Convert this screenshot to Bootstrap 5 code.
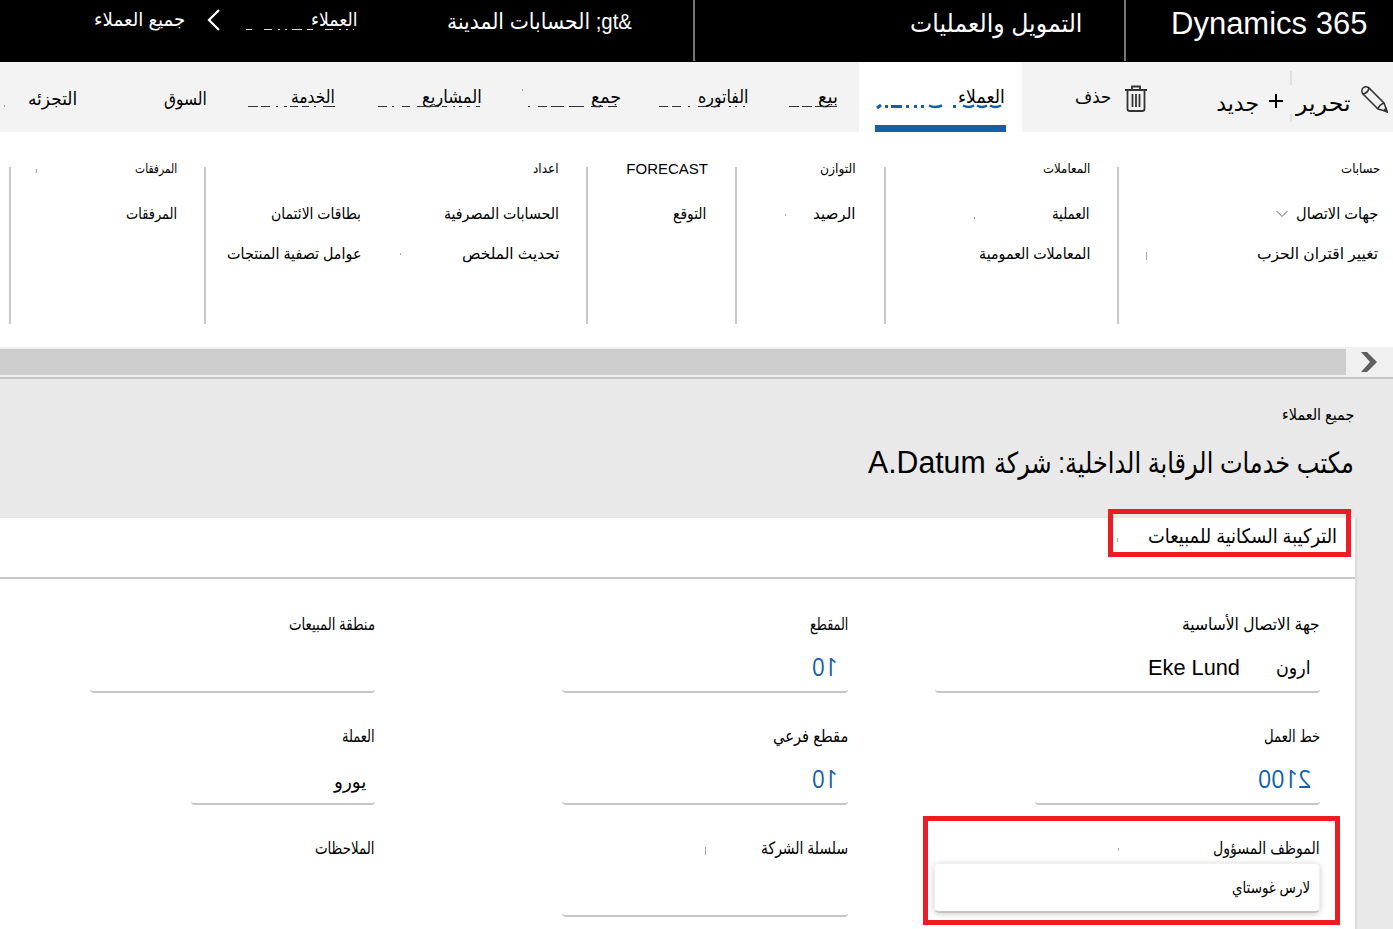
<!DOCTYPE html>
<html lang="ar" dir="rtl">
<head>
<meta charset="utf-8">
<title>Dynamics 365</title>
<link href="https://cdn.jsdelivr.net/npm/bootstrap@5.3.0/dist/css/bootstrap.min.css" rel="stylesheet">
<style>
body{width:1393px;height:929px;overflow:hidden;background:#fff;color:#000;font-family:"Liberation Sans","DejaVu Sans",sans-serif;font-size:15px;line-height:30px}
.fit{display:block;flex:none;white-space:nowrap;height:30px;line-height:30px}
.fit>span{display:inline-block;transform-origin:100% 50%}
/* header */
.topbar{height:62px;background:#000;color:#fff;border-bottom:1px solid #000}
.brand{width:269px;padding-right:26px;padding-top:9px;border-left:2px solid #767676;font-size:31px}
.app{width:431px;padding-right:42px;padding-top:8px;border-left:2px solid #767676;font-size:25px}
.crumbs{padding-right:61px}
.crumbs .c1{font-size:22px;margin-top:7px}
.crumbs .c2{font-size:19px;margin:5px 90px 0 0;position:relative}
.crumbs .chev{margin:9px 90px 0 0}
.crumbs .c3{font-size:19px;margin:5px 22px 0 0}
.residue{position:absolute;pointer-events:none}
.crumbs .residue{left:-65px;top:23px}
.tabs .residue{left:0;top:0}
/* action pane tabs */
.tabs{height:70px;background:#f3f3f3;position:relative}
.tabs .fit{font-size:18px;margin-top:20px}
.tabs .pencil{margin:24px 5px 0 0}
.tabs .edit{font-size:22px;margin:27px 10px 0 0}
.tabs .plus{margin:32px 13px 0 0;width:14px}
.tabs .new{font-size:22px;margin:27px 10px 0 0}
.tabs .bin{margin:23px 69px 0 0}
.tabs .del{margin-right:14px}
.tabs .active-tab{width:163px;margin-right:53px;background:#fff;padding-right:17px;position:relative}
.tabs .active-tab::after{content:"";position:absolute;left:16px;right:16px;bottom:0;height:7px;background:#1160a8}
.tabs .t1{margin-right:21px}.tabs .t2{margin-right:69px}.tabs .t3{margin-right:77px}.tabs .t4{margin-right:109px}
.tabs .t5{margin-right:87px}.tabs .t6{margin-right:84px;margin-top:22px}.tabs .t7{margin-right:87px;margin-top:22px}
/* action pane groups */
.groups{height:215px;padding-top:35px}
.grp{height:157px;border-left:2px solid #c8c8c8;position:relative;flex:none}
.grp .fit{font-size:15.5px;margin-right:0}
.grp .fit.hd{font-size:13px;margin:-13px 0 15px}
.grp .fit+.fit{margin-bottom:10px}
.grp .hd.latin{font-size:15px;margin-right:-1px}
.g1 .fit{margin-right:2px}
.row-menu{margin-bottom:10px}
.row-menu svg{margin:11px 8px 0 0}
.pair{width:198px}
.pair .fit+.fit,.pair+div .fit+.fit{margin-top:10px}
.g1{width:276px;padding-right:13px}.g2{width:233px;padding-right:27px}.g3{width:149px;padding-right:28px}.g4{width:149px;padding-right:28px}
.g4 .fit{margin-right:1px}
.g5{width:382px;padding-right:27px}.g6{width:195px;padding-right:27px}
.speck{position:absolute;width:1px;height:4px;background:#aaa}
.g1 .speck{left:27px;top:85px;height:8px}.g2 .speck{left:88px;top:50px;height:2px}.g3 .speck{left:48px;top:47px;height:2px}.g5 .speck{left:194px;top:86px;height:2px}.g6 .speck{left:25px;top:2px}
/* scrollbar */
.scroller{height:32px;background:#f0f0f0;border-bottom:2px solid #c6c6c6}
.thumb{width:1346px;height:26px;margin-top:2px;background:#cdcdcd}
.nextbtn{width:47px;padding:5px 16px 0 0}
/* form */
.pagehead{height:139px;background:#e9e9e9;padding-right:39px;padding-top:21px}
.pagehead .path{font-size:16px}
.pagehead .ttl{font-size:29px;margin-top:18px}
.pagehead .ttl.latin{font-size:31px;margin-right:8px}
.sheet{height:411px;background:#e9e9e9}
.paper{width:1355px;background:#fff;margin-right:38px;box-shadow:2px 0 1px #dcdcdc;position:relative}
.section-head{height:61px;border-bottom:2px solid #c8c8c8;position:relative;padding:3px 18px 0 0}
.section-head .fit{font-size:20px}
.section-head .speck{left:1117px;top:20px}
.redbox{position:absolute;border:5px solid #ed1c24;pointer-events:none}
.r1{left:1108px;top:-9px;width:243px;height:48px}
.r2{left:923px;top:298px;width:417px;height:109px}
.cols{padding:31px 35px 0 0}
.colm{flex:none;width:385px}
.colm.b{width:286px;margin-right:87px}.colm.c{width:285px;margin-right:187px}
.fld{height:112px;position:relative}
.fld>.fit{font-size:17px}
.b .speck{left:143px;top:13px;height:8px}.a .speck{left:183px;top:14px;height:3px}
.ctl{height:44px;margin-top:9px;border-bottom:2px solid #c6c6c6;border-radius:4px;padding:4px 9px 0 0}
.colm.b .ctl{padding-right:10px}
.ctl .fit{font-size:19px}
.ctl .fit.latin{font-size:22px;margin-right:36px}
.ctl .num{font-family:"Open Sans","Noto Sans",sans-serif;font-size:25px;color:#1160a8;margin-top:-2px}
.colm .w1{width:285px}.colm .w2{width:184px}
.w2 .fit{padding-top:2px}
.lookup{height:50px;width:386px;margin-top:-1px;border:1px solid #f0f0f0;border-bottom:2px solid #c3c3c3;border-radius:5px;box-shadow:0 1px 6px #ccc;padding:9px 9px 0 0}
.lookup .fit{font-size:16px}
</style>
</head>
<body>
<header class="topbar d-flex">
 <div class="brand"><div class="fit" data-w="196" dir="ltr"><span>Dynamics 365</span></div></div>
 <div class="app"><div class="fit" data-w="172"><span>التمويل والعمليات</span></div></div>
 <nav class="crumbs d-flex">
  <div class="fit c1" data-w="185"><span>&amp;gt; الحسابات المدينة</span></div>
  <div class="fit c2" data-w="47"><span>العملاء</span>
   <svg class="residue" width="112" height="3"><path d="M1 1.500H109" stroke="#ddd" stroke-dasharray="6 12 8 6 2 5 2 5 10 5"/></svg></div>
  <svg class="chev" width="13" height="22" viewBox="0 0 13 22" fill="none" stroke="#fff" stroke-width="2.300"><path d="M12 1 2 11 12 21"/></svg>
  <div class="fit c3" data-w="91"><span>جميع العملاء</span></div>
 </nav>
</header>
<nav class="tabs d-flex">
 <svg class="pencil" width="27" height="27" viewBox="0 0 27 27" fill="none" stroke="#333" stroke-width="1.500"><path d="M1.500 7.500Q0 4 2 2Q4 0 7.500 1.500L23 17 26 25.500 17 23ZM2 8Q7 7 8 2M17 23Q18 19 23 17"/><path d="M23 24.500 25 22.500 26 26Z" fill="#333"/></svg>
 <div class="fit edit" data-w="55"><span>تحرير</span></div>
 <svg class="plus" height="14" viewBox="0 0 14 14" stroke="#000" stroke-width="2"><path d="M7 0V14M0 7H14"/></svg>
 <div class="fit new" data-w="43"><span>جديد</span></div>
 <svg class="bin" width="22" height="28" viewBox="0 0 22 28" fill="none" stroke="#333" stroke-width="1.800"><path d="M0 5H22M7 4V1.500H15V4M2.500 5V24Q2.500 26 5 26H17Q19.500 26 19.500 24V5M7.500 9V22M11 9V22M14.500 9V22"/></svg>
 <div class="fit del" data-w="36"><span>حذف</span></div>
 <div class="active-tab"><div class="fit" data-w="47"><span>العملاء</span></div></div>
 <div class="fit t1" data-w="20"><span>بيع</span></div>
 <div class="fit t2" data-w="51"><span>الفاتوره</span></div>
 <div class="fit t3" data-w="30"><span>جمع</span></div>
 <div class="fit t4" data-w="60"><span>المشاريع</span></div>
 <div class="fit t5" data-w="44"><span>الخدمة</span></div>
 <div class="fit t6" data-w="43"><span>السوق</span></div>
 <div class="fit t7" data-w="49"><span>التجزئه</span></div>
 <svg class="residue" width="1393" height="70" fill="none">
  <path stroke="#333" d="M248 44.500h10m3 0h9m6 0h2m6 0h3m3 0h8m4 0h7m5 0h2m7 0h12M378 44.500h9m5 0h2m8 0h8m7 0h22m3 0h5m6 0h2m4 0h3m5 0h3m6 0h4M528 44.500h2m8 0h9m4 0h13m5 0h15m7 0h12m5 0h9M659 44.500h9m4 0h9m7 0h2m8 0h8m5 0h9m9 0h2m4 0h2m6 0h2M789 44.500h10m3 0h10m3 0h10m3 0h9"/>
  <path stroke="#e0e0e0" stroke-width="2" d="M1291 9V23M1291 52V60"/>
  <path stroke="#aaa" d="M4.500 43v2M522.500 27v2"/>
  <path stroke="#1160a8" stroke-width="3" d="M877 46l4-3M885 44.500h3M891 44.500h11M906 44.500h3M914 44.500h3M921 44.500h3M953 44.500h3"/>
  <path stroke="#1160a8" stroke-width="2.500" d="M929 43.500q6 3 13 0M963 43.500q6 3 11 0M977 43.500q5 3 10 0M990 43.500q5 3 11 0"/>
 </svg>
</nav>
<section class="groups d-flex">
 <div class="grp g1"><div class="fit hd" data-w="39"><span>حسابات</span></div>
  <div class="row-menu d-flex"><div class="fit" data-w="82"><span>جهات الاتصال</span></div><svg width="12" height="8" fill="none" stroke="#666"><path d="M.5 1 6 6.500 11.500 1"/></svg></div>
  <div class="fit" data-w="121"><span>تغيير اقتران الحزب</span></div><i class="speck"></i></div>
 <div class="grp g2"><div class="fit hd" data-w="47"><span>المعاملات</span></div><div class="fit" data-w="38"><span>العملية</span></div><div class="fit" data-w="111"><span>المعاملات العمومية</span></div><i class="speck"></i></div>
 <div class="grp g3"><div class="fit hd" data-w="36"><span>التوازن</span></div><div class="fit" data-w="43"><span>الرصيد</span></div><i class="speck"></i></div>
 <div class="grp g4"><div class="fit hd latin" data-w="82"><span>FORECAST</span></div><div class="fit" data-w="33"><span>التوقع</span></div></div>
 <div class="grp g5"><div class="fit hd" data-w="26"><span>اعداد</span></div>
  <div class="d-flex"><div class="pair"><div class="fit" data-w="115"><span>الحسابات المصرفية</span></div><div class="fit" data-w="97"><span>تحديث الملخص</span></div></div>
  <div><div class="fit" data-w="90"><span>بطاقات الائتمان</span></div><div class="fit" data-w="134"><span>عوامل تصفية المنتجات</span></div></div></div><i class="speck"></i></div>
 <div class="grp g6"><div class="fit hd" data-w="42"><span>المرفقات</span></div><div class="fit" data-w="51"><span>المرفقات</span></div><i class="speck"></i></div>
</section>
<div class="scroller d-flex"><div class="nextbtn"><svg class="d-block" width="16" height="20"><path d="M0 0H6L16 10 6 20H0L9 10Z" fill="#606060"/></svg></div><div class="thumb"></div></div>
<section class="pagehead"><div class="fit path" data-w="72"><span>جميع العملاء</span></div>
 <div class="d-flex"><div class="fit ttl" data-w="360"><span>مكتب خدمات الرقابة الداخلية: شركة</span></div><div class="fit ttl latin" data-w="118"><span>A.Datum</span></div></div></section>
<main class="sheet d-flex"><div class="paper">
 <div class="section-head"><div class="fit" data-w="189"><span>التركيبة السكانية للمبيعات</span></div><i class="speck"></i></div>
 <div class="cols d-flex">
  <div class="colm a">
   <div class="fld"><div class="fit" data-w="138"><span>جهة الاتصال الأساسية</span></div><div class="ctl d-flex"><div class="fit" data-w="35"><span>ارون</span></div><div class="fit latin" data-w="92"><span>Eke Lund</span></div></div></div>
   <div class="fld"><div class="fit" data-w="56"><span>خط العمل</span></div><div class="ctl w1"><div class="fit num" data-w="53" data-mirror><span>2100</span></div></div></div>
   <div class="fld"><div class="fit" data-w="107"><span>الموظف المسؤول</span></div><div class="lookup"><div class="fit" data-w="78"><span>لارس غوستاي</span></div></div><i class="speck"></i></div>
  </div>
  <div class="colm b">
   <div class="fld"><div class="fit" data-w="38"><span>المقطع</span></div><div class="ctl"><div class="fit num" data-w="26" data-mirror><span>10</span></div></div></div>
   <div class="fld"><div class="fit" data-w="75"><span>مقطع فرعي</span></div><div class="ctl"><div class="fit num" data-w="26" data-mirror><span>10</span></div></div></div>
   <div class="fld"><div class="fit" data-w="87"><span>سلسلة الشركة</span></div><div class="ctl"></div><i class="speck"></i></div>
  </div>
  <div class="colm c">
   <div class="fld"><div class="fit" data-w="86"><span>منطقة المبيعات</span></div><div class="ctl"></div></div>
   <div class="fld"><div class="fit" data-w="33"><span>العملة</span></div><div class="ctl w2"><div class="fit" data-w="32"><span>يورو</span></div></div></div>
   <div class="fld"><div class="fit" data-w="60"><span>الملاحظات</span></div></div>
  </div>
 </div>
 <div class="redbox r1"></div><div class="redbox r2"></div>
</div></main>
<script>
document.querySelectorAll('.fit').forEach(function(el){
 var s=el.firstElementChild,w=+el.dataset.w,k=w/s.offsetWidth;
 el.style.width=w+'px';
 if(el.dataset.mirror!==undefined){s.style.transformOrigin='0 50%';s.style.width=s.offsetWidth+'px';s.style.float='left';s.style.transform='translateX('+w+'px) scaleX('+(-k)+')';}
 else{if(el.dir==='ltr')s.style.transformOrigin='0 50%';s.style.transform='scaleX('+k+')';}
});
</script>
<script src="https://cdn.jsdelivr.net/npm/bootstrap@5.3.0/dist/js/bootstrap.bundle.min.js"></script>
</body>
</html>
